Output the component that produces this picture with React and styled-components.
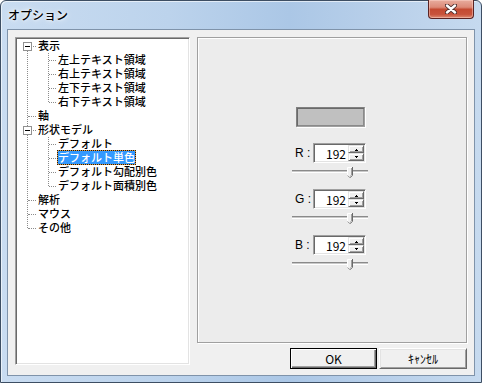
import React from "react";
import styled, { createGlobalStyle } from "styled-components";

const GlobalStyle = createGlobalStyle`
  html, body {
    margin: 0;
    padding: 0;
    background: #ffffff;
  }
  body {
    font-family: "Noto Sans CJK JP", "Noto Sans", sans-serif;
    color: #000;
  }
`;

const Window = styled.div`
  width: 482px;
  height: 383px;
  box-sizing: border-box;
  border: 1px solid #3d4e63;
  border-radius: 6px 6px 0 0;
  background: linear-gradient(
    to right,
    #c9dcf1 0%,
    #bcd3ec 35%,
    #abc7e6 60%,
    #b9d0ea 80%,
    #c6daef 100%
  );
  box-shadow: inset 1px 1px 0 rgba(255, 255, 255, 0.6);
  display: flex;
  flex-direction: column;
  padding: 0 6px 6px;
`;

const TitleBar = styled.div`
  height: 28px;
  display: flex;
  align-items: flex-start;
  justify-content: space-between;
`;

const Title = styled.div`
  padding: 7px 0 0 1px;
  font-size: 12px;
  line-height: 14px;
  font-weight: 500;
  text-shadow: 0 0 6px rgba(255, 255, 255, 0.95), 0 0 3px #fff;
`;

const CloseButton = styled.div`
  width: 44px;
  height: 18px;
  margin: -1px 1px 0 0;
  border: 1px solid #5a2323;
  border-top: none;
  border-radius: 0 0 4px 4px;
  background: linear-gradient(
    #e8ac9e 0%,
    #dc8a78 40%,
    #c44a32 52%,
    #c8533c 80%,
    #dd8a72 100%
  );
  box-shadow: inset 0 0 0 1px rgba(255, 220, 210, 0.45);
  display: flex;
  align-items: center;
  justify-content: center;
`;

const Client = styled.div`
  flex: 1;
  border: 1px solid #7f93aa;
  background: #f0f0f0;
  display: grid;
  grid-template-columns: 175px 1fr;
  column-gap: 7px;
  padding: 7px 7px 0;
  align-items: start;
`;

/* ---------- tree ---------- */

const TreeBox = styled.div`
  height: 328px;
  box-sizing: border-box;
  background: #fff;
  border: 1px solid;
  border-color: #a0a0a0 #ffffff #ffffff #a0a0a0;
  box-shadow: inset 1px 1px 0 #696969, inset -1px -1px 0 #e3e3e3;
  padding: 1px 0 0 1px;
  overflow: hidden;
`;

const Group = styled.div`
  position: relative;

  &::before {
    content: "";
    position: absolute;
    left: ${(p) => 10 + p.$level * 21}px;
    top: ${(p) => (p.$level === 0 ? 7 : 0)}px;
    bottom: 7px;
    border-left: 1px dotted #8c8c8c;
  }
`;

const Row = styled.div`
  position: relative;
  height: 14px;
  display: flex;
  align-items: flex-start;
  padding-left: ${(p) => 6 + p.$level * 20}px;

  &::before {
    content: "";
    position: absolute;
    left: ${(p) => 11 + p.$level * 21}px;
    width: ${(p) => 8 - p.$level}px;
    top: 7px;
    border-top: 1px dotted #8c8c8c;
  }
`;

const Expander = styled.div`
  position: relative;
  z-index: 1;
  width: 9px;
  height: 9px;
  margin-top: 3px;
  box-sizing: border-box;
  border: 1px solid #919191;
  background: #fff;
  display: flex;
  align-items: center;
  justify-content: center;

  &::after {
    content: "";
    width: 5px;
    height: 1px;
    background: #000;
  }
`;

const Spacer = styled.div`
  width: 9px;
`;

const Label = styled.div`
  margin-left: 5px;
  height: 13px;
  line-height: 13px;
  font-size: 11px;
  font-weight: 500;
  white-space: nowrap;
  overflow: hidden;
  border: 1px ${(p) => (p.$selected ? "dotted #1a1a1a" : "solid transparent")};
  padding: 0;
  margin-top: -1px;
  color: ${(p) => (p.$selected ? "#fff" : "#000")};
  background: ${(p) =>
    p.$selected
      ? "linear-gradient(#3399ff, #3399ff) padding-box, #e49a3c border-box"
      : "transparent"};
`;

const treeData = [
  {
    label: "表示",
    children: [
      "左上テキスト領域",
      "右上テキスト領域",
      "左下テキスト領域",
      "右下テキスト領域",
    ],
  },
  { label: "軸" },
  {
    label: "形状モデル",
    children: [
      "デフォルト",
      "デフォルト単色",
      "デフォルト勾配別色",
      "デフォルト面積別色",
    ],
  },
  { label: "解析" },
  { label: "マウス" },
  { label: "その他" },
];

function Tree({ selected }) {
  return (
    <TreeBox>
      <Group $level={0}>
        {treeData.map((node) => (
          <React.Fragment key={node.label}>
            <Row $level={0}>
              {node.children ? <Expander /> : <Spacer />}
              <Label>{node.label}</Label>
            </Row>
            {node.children && (
              <Group $level={1}>
                {node.children.map((c) => (
                  <Row $level={1} key={c}>
                    <Spacer />
                    <Label $selected={c === selected}>{c}</Label>
                  </Row>
                ))}
              </Group>
            )}
          </React.Fragment>
        ))}
      </Group>
    </TreeBox>
  );
}

/* ---------- right side ---------- */

const RightColumn = styled.div`
  display: flex;
  flex-direction: column;
`;

const Panel = styled.div`
  height: 306px;
  box-sizing: border-box;
  border: 1px solid #a0a0a0;
  box-shadow: inset 1px 1px 0 #fff, 1px 1px 0 #fff;
  background: #ececec;
  padding: 69px 0 0 93px;
  display: flex;
  flex-direction: column;
  align-items: flex-start;
`;

const Swatch = styled.div`
  width: 69px;
  height: 20px;
  margin-left: 5px;
  box-sizing: border-box;
  border: 1px solid;
  border-color: #808080 #a0a0a0 #a0a0a0 #808080;
  box-shadow: inset 1px 1px 0 #696969, inset -1px -1px 0 #8a8a8a, 1px 1px 0 #fff;
  background: #c0c0c0;
`;

const Channel = styled.div`
  margin-top: ${(p) => (p.$first ? 16 : 11)}px;
  width: 78px;
`;

const SpinRow = styled.div`
  display: flex;
  align-items: center;
`;

const ChannelLabel = styled.div`
  width: 18px;
  padding-left: 4px;
  font-family: "Liberation Sans", Arial, sans-serif;
  font-size: 12px;
  line-height: 14px;
  white-space: pre;
`;

const SpinEdit = styled.div`
  width: 53px;
  height: 20px;
  box-sizing: border-box;
  border: 1px solid;
  border-color: #a0a0a0 #ffffff #ffffff #a0a0a0;
  box-shadow: inset 1px 1px 0 #696969, inset -1px -1px 0 #e3e3e3;
  background: #fff;
  display: flex;
  padding: 1px 1px 0 1px;
`;

const SpinValue = styled.div`
  flex: 1;
  text-align: right;
  padding-right: 2px;
  font-size: 12px;
  line-height: 17px;
`;

const SpinButtons = styled.div`
  width: 16px;
  display: flex;
  flex-direction: column;
  margin-bottom: 1px;
`;

const SpinButton = styled.div`
  flex: 1;
  box-sizing: border-box;
  border: 1px solid;
  border-color: #e3e3e3 #696969 #696969 #e3e3e3;
  box-shadow: inset 1px 1px 0 #fff, inset -1px -1px 0 #a0a0a0;
  background: #f0f0f0;
  display: flex;
  align-items: center;
  justify-content: center;
`;

const Slider = styled.div`
  position: relative;
  margin-top: 3px;
  height: 12px;
  width: 78px;
`;

const Groove = styled.div`
  position: absolute;
  left: 1px;
  right: 1px;
  top: 4px;
  height: 3px;
  box-sizing: border-box;
  border-top: 1px solid #8a8a8a;
  border-bottom: 1px solid #ffffff;
  background: #c8c8c8;
`;

const Thumb = styled.svg`
  position: absolute;
  top: 1px;
`;

function Arrow({ down }) {
  return (
    <svg width="5" height="3" viewBox="0 0 5 3">
      {down ? (
        <>
          <rect x="1" y="0" width="3" height="1" fill="#000" />
          <rect x="2" y="1" width="1" height="1" fill="#000" />
        </>
      ) : (
        <>
          <rect x="2" y="1" width="1" height="1" fill="#000" />
          <rect x="1" y="2" width="3" height="1" fill="#000" />
        </>
      )}
    </svg>
  );
}

function ColorChannel({ name, value, first }) {
  const thumbLeft = Math.round(((78 - 6) * value) / 255) + 2;
  return (
    <Channel $first={first}>
      <SpinRow>
        <ChannelLabel>{name} :</ChannelLabel>
        <SpinEdit>
          <SpinValue>{value}</SpinValue>
          <SpinButtons>
            <SpinButton>
              <Arrow />
            </SpinButton>
            <SpinButton>
              <Arrow down />
            </SpinButton>
          </SpinButtons>
        </SpinEdit>
      </SpinRow>
      <Slider>
        <Groove />
        <Thumb
          width="6"
          height="11"
          viewBox="0 0 6 11"
          style={{ left: thumbLeft }}
        >
          <polygon points="0,0 6,0 6,8 3,11 0,8" fill="#f0f0f0" />
          <path d="M0.5 8.5V0.5H5" stroke="#fff" fill="none" />
          <path d="M5.5 0V8.3L3 10.8" stroke="#696969" fill="none" />
          <path d="M4.5 1V8L2.6 9.9" stroke="#a0a0a0" fill="none" />
          <path d="M0.5 8.5L2.7 10.7" stroke="#a0a0a0" fill="none" />
        </Thumb>
      </Slider>
    </Channel>
  );
}

const ButtonRow = styled.div`
  display: flex;
  justify-content: flex-end;
  gap: 2px;
  margin-top: 5px;
`;

const Button = styled.div`
  width: ${(p) => p.$width}px;
  height: 21px;
  box-sizing: border-box;
  border: 1px solid;
  border-color: ${(p) =>
    p.$default ? "#000" : "#fff #696969 #696969 #fff"};
  box-shadow: ${(p) =>
    p.$default
      ? "inset 1px 1px 0 #fff, inset -1px -1px 0 #696969, inset -2px -2px 0 #a0a0a0"
      : "inset 1px 1px 0 #e3e3e3, inset -1px -1px 0 #a0a0a0"};
  background: #f0f0f0;
  font-size: 12px;
  line-height: 19px;
  text-align: center;
`;

export default function App() {
  const channels = [
    { name: "R", value: 192 },
    { name: "G", value: 192 },
    { name: "B", value: 192 },
  ];
  return (
    <>
      <GlobalStyle />
      <Window>
        <TitleBar>
          <Title>オプション</Title>
          <CloseButton>
            <svg width="12" height="10" viewBox="0 0 12 10">
              <path
                d="M2 1.5L10 8.5M10 1.5L2 8.5"
                stroke="#4a2a2a"
                strokeWidth="4.2"
                strokeLinecap="round"
              />
              <path
                d="M2 1.5L10 8.5M10 1.5L2 8.5"
                stroke="#ffffff"
                strokeWidth="2.4"
                strokeLinecap="round"
              />
            </svg>
          </CloseButton>
        </TitleBar>
        <Client>
          <Tree selected="デフォルト単色" />
          <RightColumn>
            <Panel>
              <Swatch />
              {channels.map((c, i) => (
                <ColorChannel
                  key={c.name}
                  name={c.name}
                  value={c.value}
                  first={i === 0}
                />
              ))}
            </Panel>
            <ButtonRow>
              <Button $width={87} $default>
                OK
              </Button>
              <Button $width={88}>ｷｬﾝｾﾙ</Button>
            </ButtonRow>
          </RightColumn>
        </Client>
      </Window>
    </>
  );
}
